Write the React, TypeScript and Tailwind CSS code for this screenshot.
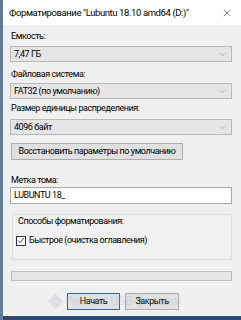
import { ChevronDown, X } from "lucide-react";

const font = { fontFamily: 'Roboto, "Liberation Sans", Arial, sans-serif' };
const txt = "text-[9px] leading-[13px] tracking-[-0.45px] text-black";

function Select({ value }: { value: string }) {
  return (
    <div className="h-[16px] bg-[#e5e5e5] border border-[#b9b9b9] flex items-center justify-between pl-[3px] pr-[4px]">
      <span className={txt}>{value}</span>
      <ChevronDown className="w-[9px] h-[9px] text-[#8a8a8a]" strokeWidth={1.5} />
    </div>
  );
}

function Label({ text, className = "" }: { text: string; className?: string }) {
  return (
    <div className={`text-[9px] leading-[14px] tracking-[-0.45px] text-black ${className}`}>{text}</div>
  );
}

export default function App() {
  return (
    <div
      className="relative w-[241px] h-[320px] overflow-hidden bg-[#f0f0f0] border-l-[3px] border-[#5d7c9b] flex flex-col"
      style={font}
    >
      <div className="h-[25px] bg-white flex items-center justify-between pl-[6px] pr-[8px] shrink-0">
        <span className="text-[9.5px] leading-[14px] tracking-[-0.4px] text-black whitespace-nowrap">
          Форматирование "Lubuntu 18.10 amd64 (D:)"
        </span>
        <X className="w-[12px] h-[12px] text-[#333]" strokeWidth={1.2} />
      </div>

      <div className="flex flex-col pl-[7px] pr-[9px]">
        <Label text="Емкость:" className="mt-[4px] pl-[1px]" />
        <div className="mt-[3px]">
          <Select value="7,47 ГБ" />
        </div>
        <Label text="Файловая система:" className="mt-[5px] pl-[1px]" />
        <div className="mt-[2px]">
          <Select value="FAT32 (по умолчанию)" />
        </div>
        <Label text="Размер единицы распределения:" className="mt-[2px] pl-[1px]" />
        <div className="mt-[4px]">
          <Select value="4096 байт" />
        </div>

        <div className="mt-[8px] ml-[1px] w-[172px] h-[17px] bg-[#e1e1e1] border border-[#adadad] flex items-center justify-center">
          <span className={`${txt} whitespace-nowrap`}>Восстановить параметры по умолчанию</span>
        </div>

        <Label text="Метка тома:" className="mt-[13px] pl-[1px]" />
        <div className="h-[17px] bg-white border border-[#a9a9a9] flex items-center pl-[3px]">
          <span className={txt}>LUBUNTU 18_</span>
        </div>

        <div className="mt-[10px] ml-[2px] h-[46px] border border-[#dedede] bg-[#f2f2f2] flex flex-col px-[3px]">
          <Label text="Способы форматирования:" className="pl-[2px] mt-[-1px]" />
          <div className="mt-[6px] flex items-center gap-[3px]">
            <div className="w-[10px] h-[10px] border border-[#333] bg-white flex items-center justify-center">
              <svg viewBox="0 0 10 10" className="w-[9px] h-[9px]">
                <path d="M1.5 5 L4 7.5 L8.5 2" fill="none" stroke="#222" strokeWidth="1.1" />
              </svg>
            </div>
            <span className={txt}>Быстрое (очистка оглавления)</span>
          </div>
        </div>

        <div className="mt-[11px] ml-[1px] h-[10px] bg-[#e6e6e6] border border-[#bcbcbc]" />

        <div className="mt-[12px] flex justify-center gap-[5px] pl-[4px]">
          <div className="w-[53px] h-[17px] bg-[#e1e1e1] border border-[#2f6ea8] flex items-center justify-center">
            <span className={txt}>Начать</span>
          </div>
          <div className="w-[54px] h-[17px] bg-[#e1e1e1] border border-[#adadad] flex items-center justify-center">
            <span className={txt}>Закрыть</span>
          </div>
        </div>
      </div>

      <div className="absolute left-[47px] top-[294px] flex items-center gap-[4px] opacity-20 pointer-events-none">
        <div className="w-[11px] h-[11px] rotate-45 bg-[#7fa3c9]" />
        <span className="text-[12px] leading-[15px] text-[#7f9fbf] whitespace-nowrap">Ремонт USB-флешки</span>
      </div>

      <div className="absolute left-0 right-0 bottom-0 h-[5px] bg-[#2c4a6b] border-t border-white" />
    </div>
  );
}
